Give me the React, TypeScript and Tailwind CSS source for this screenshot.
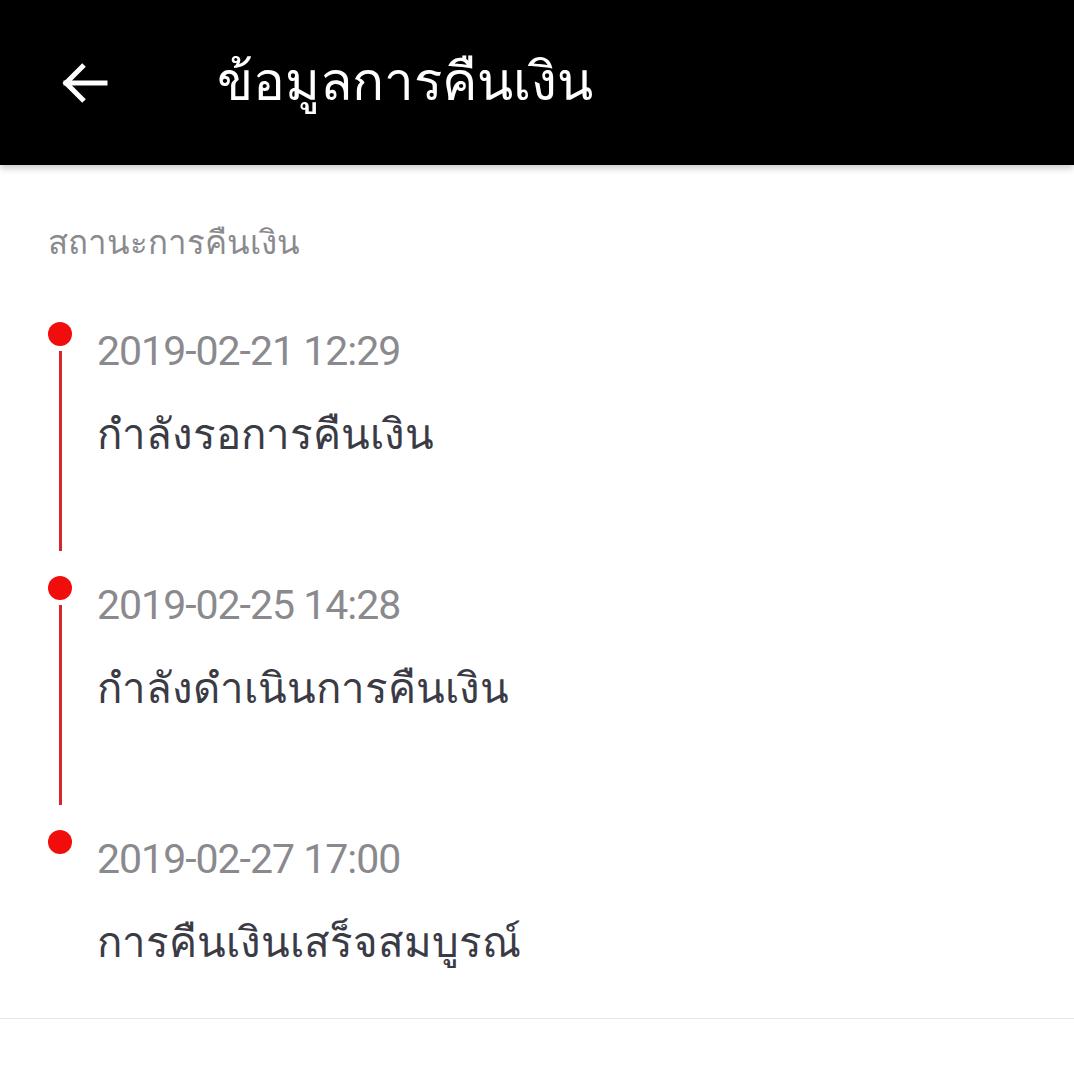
type Step = { time: string; label: string };

const steps: Step[] = [
  { time: "2019-02-21 12:29", label: "กำลังรอการคืนเงิน" },
  { time: "2019-02-25 14:28", label: "กำลังดำเนินการคืนเงิน" },
  { time: "2019-02-27 17:00", label: "การคืนเงินเสร็จสมบูรณ์" },
];

function BackArrow() {
  return (
    <svg width="48" height="44" viewBox="0 0 48 44" fill="none" stroke="currentColor" strokeWidth="5" strokeLinecap="square">
      <path d="M45 22H6" />
      <path d="M24 4 6 22l18 18" strokeLinecap="butt" />
    </svg>
  );
}

export default function App() {
  return (
    <div className="min-h-screen bg-white font-['Roboto','Noto_Sans',sans-serif]">
      <header className="relative z-10 flex h-[165px] items-center bg-black shadow-[0_3px_7px_rgba(0,0,0,0.22)]">
        <div className="flex w-[217px] items-center pl-[60px] text-white">
          <BackArrow />
        </div>
        <h1 className="text-[53px] leading-none text-white">ข้อมูลการคืนเงิน</h1>
      </header>

      <main>
        <div className="px-[48px] pt-[57px] text-[33px] leading-[42px] text-[#8a8a8e]">
          สถานะการคืนเงิน
        </div>

        <ol className="mt-[56px] border-b border-[#e6e6e6]">
          {steps.map((s, i) => (
            <li key={s.time} className="flex h-[254px] last:h-[190px]">
              <div className="ml-[48px] flex w-[24px] flex-col items-center pt-[2px]">
                <span className="h-[24px] w-[24px] rounded-full bg-[#f20d0d]" />
                {i < steps.length - 1 && (
                  <span className="mt-[5px] h-[200px] w-[3px] bg-[#d4262c]" />
                )}
              </div>
              <div className="ml-[25px] flex flex-col pt-[6px]">
                <span className="text-[41px] leading-[50px] tracking-[-1px] text-[#8a8a8e]">
                  {s.time}
                </span>
                <span className="mt-[34px] text-[42px] leading-[50px] text-[#3a3b45]">
                  {s.label}
                </span>
              </div>
            </li>
          ))}
        </ol>
      </main>
    </div>
  );
}
